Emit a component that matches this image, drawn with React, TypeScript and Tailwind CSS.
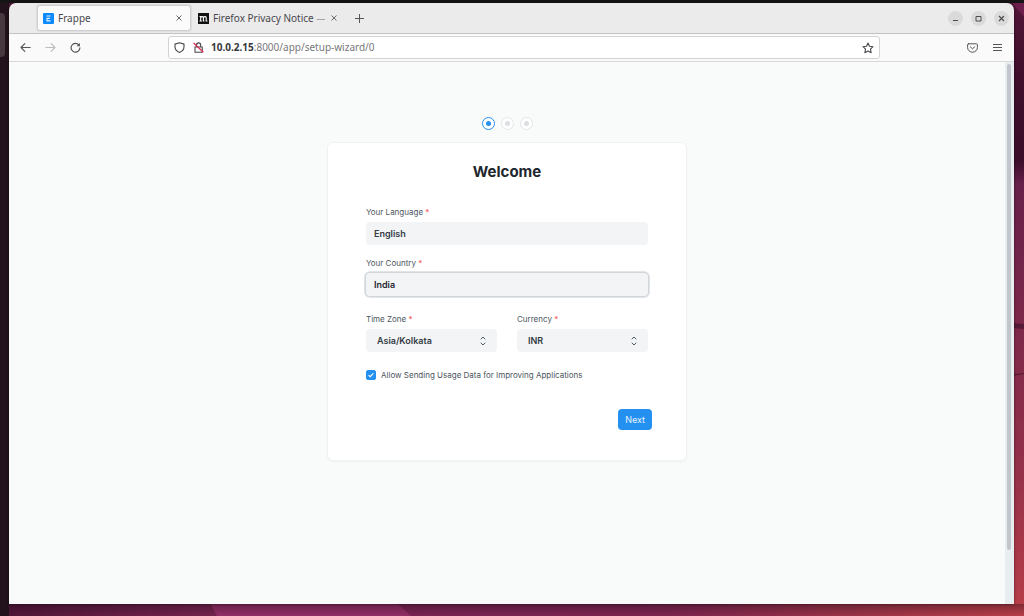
import { useState } from 'react';
import type { ReactNode } from 'react';

const steps = ['Welcome', 'Account', 'Organization'];

function Wallpaper() {
  return (
    <svg
      className="absolute inset-0 -z-10 h-full w-full"
      viewBox="0 0 1024 616"
      preserveAspectRatio="none"
      aria-hidden="true"
    >
      <defs>
        <linearGradient id="side" x1="0" y1="0" x2="0" y2="1">
          <stop offset="0" stopColor="#521638" />
          <stop offset="0.12" stopColor="#3f0f2b" />
          <stop offset="0.26" stopColor="#3b0d29" />
          <stop offset="0.3" stopColor="#67204a" />
          <stop offset="0.52" stopColor="#7c284a" />
          <stop offset="0.75" stopColor="#93304a" />
          <stop offset="1" stopColor="#b83e48" />
        </linearGradient>
        <linearGradient id="floor" x1="0" y1="0" x2="1" y2="0">
          <stop offset="0" stopColor="#501638" />
          <stop offset="0.2" stopColor="#74234d" />
          <stop offset="0.45" stopColor="#7b2454" />
          <stop offset="0.65" stopColor="#7d2450" />
          <stop offset="0.8" stopColor="#963148" />
          <stop offset="1" stopColor="#b83e48" />
        </linearGradient>
        <linearGradient id="shade" x1="0" y1="0" x2="0" y2="1">
          <stop offset="0" stopColor="#1c0914" stopOpacity="0.35" />
          <stop offset="1" stopColor="#1c0914" stopOpacity="0" />
        </linearGradient>
      </defs>
      <rect width="1024" height="616" fill="url(#side)" />
      <path d="M1012 3h12v14z" fill="#6d1f4c" />
      <path d="M1013 323l11 1v5l-11 -1z" fill="#561a38" />
      <path d="M1013 374l11 -1v1l-11 2z" fill="#5d1b35" />
      <rect y="600" width="1024" height="16" fill="url(#floor)" />
      <path d="M210 603h187l14 13H217z" fill="#922f66" />
      <rect y="604" width="1024" height="12" fill="url(#shade)" />
    </svg>
  );
}

function CloseIcon() {
  return (
    <svg className="h-[6px] w-[6px]" viewBox="0 0 6 6" stroke="#6b6b6f" aria-hidden="true">
      <path d="M.5 .5l5 5M5.5 .5l-5 5" />
    </svg>
  );
}

function WindowButton({ label, children }: { label: string; children: ReactNode }) {
  return (
    <button
      type="button"
      aria-label={label}
      className="flex h-[15px] w-[15px] items-center justify-center rounded-full bg-[#dadada]"
    >
      <svg className="h-[7px] w-[7px]" viewBox="0 0 7 7" fill="none" stroke="#4d4d4d" aria-hidden="true">
        {children}
      </svg>
    </button>
  );
}

function TabStrip() {
  return (
    <div className="flex h-[31px] items-center border-b border-[#c2c2c4] bg-[#ebebeb] pr-[5px] pl-7 text-[10px] text-[#48484c]">
      <div className="flex h-[26px] w-[154px] items-center rounded-[3px] border border-[#cfcfd1] bg-[#fbfbfb] px-[5px] shadow-[0_0_2px_rgba(0,0,0,0.2)]">
        <svg className="mr-1 h-[11px] w-[11px]" viewBox="0 0 11 11" aria-hidden="true">
          <rect width="11" height="11" rx="1" fill="#0a8afc" />
          <path d="M3.5 3h4M3.5 5.4h3.4M3.5 7.9h4M4 5v3" stroke="#e3f2ff" strokeWidth="1.1" fill="none" />
        </svg>
        <span className="flex-1">Frappe</span>
        <button type="button" aria-label="Close Frappe tab" className="px-[3px]">
          <CloseIcon />
        </button>
      </div>
      <div className="flex h-[26px] w-[154px] items-center pl-[7px]">
        <svg className="mr-1 h-[11px] w-[11px] shrink-0" viewBox="0 0 11 11" aria-hidden="true">
          <rect width="11" height="11" fill="#111" />
          <path
            d="M1.5 3.5h1.2v4.3M1.5 8h2.3M2.8 4.4c1-1.2 2.6-1 2.6.4V8M4.8 8h1.6M5.5 4.4c1-1.2 2.7-1 2.7.4V8h1.3"
            stroke="#fff"
            strokeWidth="1.1"
            fill="none"
          />
        </svg>
        <span className="w-[112px] overflow-hidden whitespace-nowrap">
          Firefox Privacy Notice <span className="text-[#a5a5a8]">—</span>
        </span>
        <button type="button" aria-label="Close Firefox Privacy Notice tab" className="px-[6px]">
          <CloseIcon />
        </button>
      </div>
      <button type="button" aria-label="Open a new tab" className="ml-[10px]">
        <svg className="h-[9px] w-[9px]" viewBox="0 0 9 9" stroke="#55555a" aria-hidden="true">
          <path d="M4.5 0v9M0 4.5h9" />
        </svg>
      </button>
      <div className="ml-auto flex gap-2">
        <WindowButton label="Minimize">
          <path d="M1 5.5h5" />
        </WindowButton>
        <WindowButton label="Maximize">
          <path d="M1 1.5h5v4.5h-5z" />
        </WindowButton>
        <WindowButton label="Close">
          <path d="M1 1l5 5M6 1l-5 5" strokeWidth="1.2" />
        </WindowButton>
      </div>
    </div>
  );
}

function Toolbar() {
  const [url, setUrl] = useState(':8000/app/setup-wizard/0');

  return (
    <div className="flex h-7 items-center border-b border-[#d8d8da] bg-[#fafafa] pr-3 pl-[11px]">
      <div className="flex w-[148px] items-center gap-[14px]">
        <button type="button" aria-label="Back">
          <svg className="h-[11px] w-[11px]" viewBox="0 0 11 11" fill="none" stroke="#55555a" strokeWidth="1.1" strokeLinecap="round" strokeLinejoin="round" aria-hidden="true">
            <path d="M10.2 5.5H1M4.8 1.7L1 5.5l3.8 3.8" />
          </svg>
        </button>
        <button type="button" aria-label="Forward" disabled>
          <svg className="h-[11px] w-[11px]" viewBox="0 0 11 11" fill="none" stroke="#bcbcbe" strokeWidth="1.1" strokeLinecap="round" strokeLinejoin="round" aria-hidden="true">
            <path d="M.8 5.5H10M6.2 1.7L10 5.5 6.2 9.3" />
          </svg>
        </button>
        <button type="button" aria-label="Reload">
          <svg className="h-[11px] w-[11px]" viewBox="0 0 11 11" fill="none" stroke="#55555a" strokeWidth="1.2" strokeLinecap="round" aria-hidden="true">
            <path d="M9 3.1A4.4 4.4 0 1 0 9.9 5.8" />
            <path d="M9.9 .9v3.4H6.5z" fill="#55555a" stroke="none" />
          </svg>
        </button>
      </div>
      <div className="flex h-[23px] w-[712px] items-center rounded-[3px] border border-[#d3d3d5] bg-white px-[5px] text-[10px]">
        <svg className="h-[11px] w-[11px]" viewBox="0 0 11 11" fill="none" stroke="#48484c" strokeWidth="1.1" strokeLinejoin="round" aria-hidden="true">
          <path d="M5.5 .7L1 2.1v2.7c0 2.6 1.8 4.6 4.5 5.6C8.2 9.4 10 7.4 10 4.8V2.1z" />
        </svg>
        <svg className="ml-2 h-[11px] w-[11px]" viewBox="0 0 11 11" fill="none" aria-hidden="true">
          <path d="M2 5h7.2v5.2H2zM3.5 5V3a2.1 2.1 0 0 1 4.2 0v2" stroke="#48484c" strokeWidth="1.1" />
          <path d="M.6 1l9.8 9.2" stroke="#e22850" strokeWidth="1.2" />
        </svg>
        <label htmlFor="url" className="ml-[7px] font-bold text-[#38383c]">
          10.0.2.15
        </label>
        <input
          id="url"
          value={url}
          onChange={(e) => setUrl(e.target.value)}
          className="min-w-0 flex-1 text-[#78787c] outline-none"
        />
        <button type="button" aria-label="Bookmark this page">
          <svg className="h-3 w-3" viewBox="0 0 12 12" fill="none" stroke="#48484c" strokeWidth="1.1" strokeLinejoin="round" aria-hidden="true">
            <path d="M6 1l1.5 3.2 3.5.5-2.5 2.4.6 3.6L6 9l-3.1 1.7.6-3.6L1 4.7l3.5-.5z" />
          </svg>
        </button>
      </div>
      <div className="ml-auto flex items-center gap-[15px]">
        <button type="button" aria-label="Save to Pocket">
          <svg className="h-[10px] w-[11px]" viewBox="0 0 11 10" fill="none" stroke="#55555a" strokeLinecap="round" strokeLinejoin="round" aria-hidden="true">
            <path d="M1.5 .8h8c.5 0 .9.3.9.9v2.8a4.9 4.7 0 0 1-9.8 0V1.7c0-.6.4-.9.9-.9zM3.3 3.8l2.2 2 2.2-2" />
          </svg>
        </button>
        <button type="button" aria-label="Open application menu">
          <svg className="h-[9px] w-[9px]" viewBox="0 0 9 9" stroke="#55555a" aria-hidden="true">
            <path d="M0 1.5h9M0 4.5h9M0 7.5h9" />
          </svg>
        </button>
      </div>
    </div>
  );
}

function FieldLabel({ htmlFor, children }: { htmlFor: string; children: ReactNode }) {
  return (
    <label htmlFor={htmlFor} className="mb-1 block text-[8px] leading-3 text-[#4c565e]">
      {children} <span className="text-[#f0504c]">*</span>
    </label>
  );
}

function SelectField({ id, label, options }: { id: string; label: string; options: string[] }) {
  return (
    <div>
      <FieldLabel htmlFor={id}>{label}</FieldLabel>
      <div className="relative">
        <select
          id={id}
          className="block h-[23px] w-full appearance-none rounded-[4px] bg-[#f3f4f6] px-[11px] font-semibold text-[#333c44]"
        >
          {options.map((option) => (
            <option key={option}>{option}</option>
          ))}
        </select>
        <svg
          className="pointer-events-none absolute top-[7px] right-[11px] h-[10px] w-[6px]"
          viewBox="0 0 6 10"
          fill="none"
          stroke="#4c5a67"
          strokeLinecap="round"
          strokeLinejoin="round"
          aria-hidden="true"
        >
          <path d="M1 3l2-2 2 2M1 7l2 2 2-2" />
        </svg>
      </div>
    </div>
  );
}

function SetupWizard() {
  const [language, setLanguage] = useState('English');
  const [country, setCountry] = useState('India');
  const [allowUsage, setAllowUsage] = useState(true);
  const current = 0;

  return (
    <main className="flex-1 bg-[#f9fafa] pt-[55px] font-[Inter,sans-serif] text-[9px]">
      <div className="flex justify-center gap-[6px]">
        {steps.map((step, index) => (
          <div
            key={step}
            className={`flex h-[13px] w-[13px] items-center justify-center rounded-full border bg-white ${
              index === current ? 'border-[#2490ef]' : 'border-[#e2e6e9]'
            }`}
          >
            <div className={`h-[5px] w-[5px] rounded-full ${index === current ? 'bg-[#2490ef]' : 'bg-[#dce0e3]'}`} />
          </div>
        ))}
      </div>

      <form
        className="mx-auto mt-3 w-full max-w-[360px] rounded-[6px] border border-[#eff1f2] bg-white px-[38px] pt-[18px] pb-[30px] shadow-[0_1px_2px_rgba(0,0,0,0.04)]"
        onSubmit={(e) => e.preventDefault()}
      >
        <h1 className="mb-[23px] text-center text-[15px] leading-[22px] font-bold text-[#1f272e]">Welcome</h1>

        <FieldLabel htmlFor="language">Your Language</FieldLabel>
        <input
          id="language"
          value={language}
          onChange={(e) => setLanguage(e.target.value)}
          className="mb-3 block h-[23px] w-full rounded-[4px] bg-[#f3f4f6] px-2 font-semibold text-[#333c44]"
        />

        <FieldLabel htmlFor="country">Your Country</FieldLabel>
        <input
          id="country"
          value={country}
          onChange={(e) => setCountry(e.target.value)}
          className="mb-[17px] block h-[23px] w-full rounded-[4px] bg-[#f3f4f6] px-2 font-semibold text-[#1f272e] shadow-[0_0_0_2px_#e2e5e8] ring-1 ring-[#d2d6da] outline-none"
        />

        <div className="grid grid-cols-2 gap-5">
          <SelectField id="timezone" label="Time Zone" options={['Asia/Kolkata']} />
          <SelectField id="currency" label="Currency" options={['INR', 'USD', 'EUR']} />
        </div>

        <label className="mt-[17px] flex h-3 items-center gap-[5px] text-[8px] text-[#4c565e]">
          <input
            type="checkbox"
            checked={allowUsage}
            onChange={(e) => setAllowUsage(e.target.checked)}
            className="peer sr-only"
          />
          <span className="flex h-[10px] w-[10px] items-center justify-center rounded-[2px] border border-[#2490ef] peer-checked:bg-[#2490ef]">
            <svg className="h-[6px] w-[6px]" viewBox="0 0 6 6" fill="none" stroke="#fff" strokeWidth="1.1" aria-hidden="true">
              <path d="M.6 3.2l1.6 1.5L5.4 1.3" />
            </svg>
          </span>
          Allow Sending Usage Data for Improving Applications
        </label>

        <div className="-mr-1 mt-7 flex justify-end">
          <button type="submit" className="h-[21px] rounded-[4px] bg-[#2490ef] px-[7px] text-[#e6f3ff]">
            Next
          </button>
        </div>
      </form>
    </main>
  );
}

export default function App() {
  return (
    <div className="relative isolate flex h-screen flex-col overflow-hidden font-['Noto_Sans','Open_Sans',sans-serif]">
      <Wallpaper />
      <div className="h-[3px] shrink-0 bg-[#151515]" />
      <div className="flex min-h-0 flex-1">
        <div className="w-[9px] bg-[#21121b] pt-[10px]">
          <div className="h-11 w-[5px] rounded-r-[4px] bg-[#473840]" />
        </div>
        <div className="mr-[10px] mb-3 flex min-w-0 flex-1 flex-col overflow-hidden rounded-t-[7px] shadow-[0_0_3px_rgba(0,0,0,0.5)]">
          <TabStrip />
          <Toolbar />
          <div className="flex min-h-0 flex-1">
            <SetupWizard />
            <div className="w-[9px] bg-[#e8edf0] pt-[2px] pr-[3px] pl-[2px]">
              <div className="h-[90%] rounded-full bg-[#c0c6cc]" />
            </div>
          </div>
        </div>
      </div>
    </div>
  );
}
